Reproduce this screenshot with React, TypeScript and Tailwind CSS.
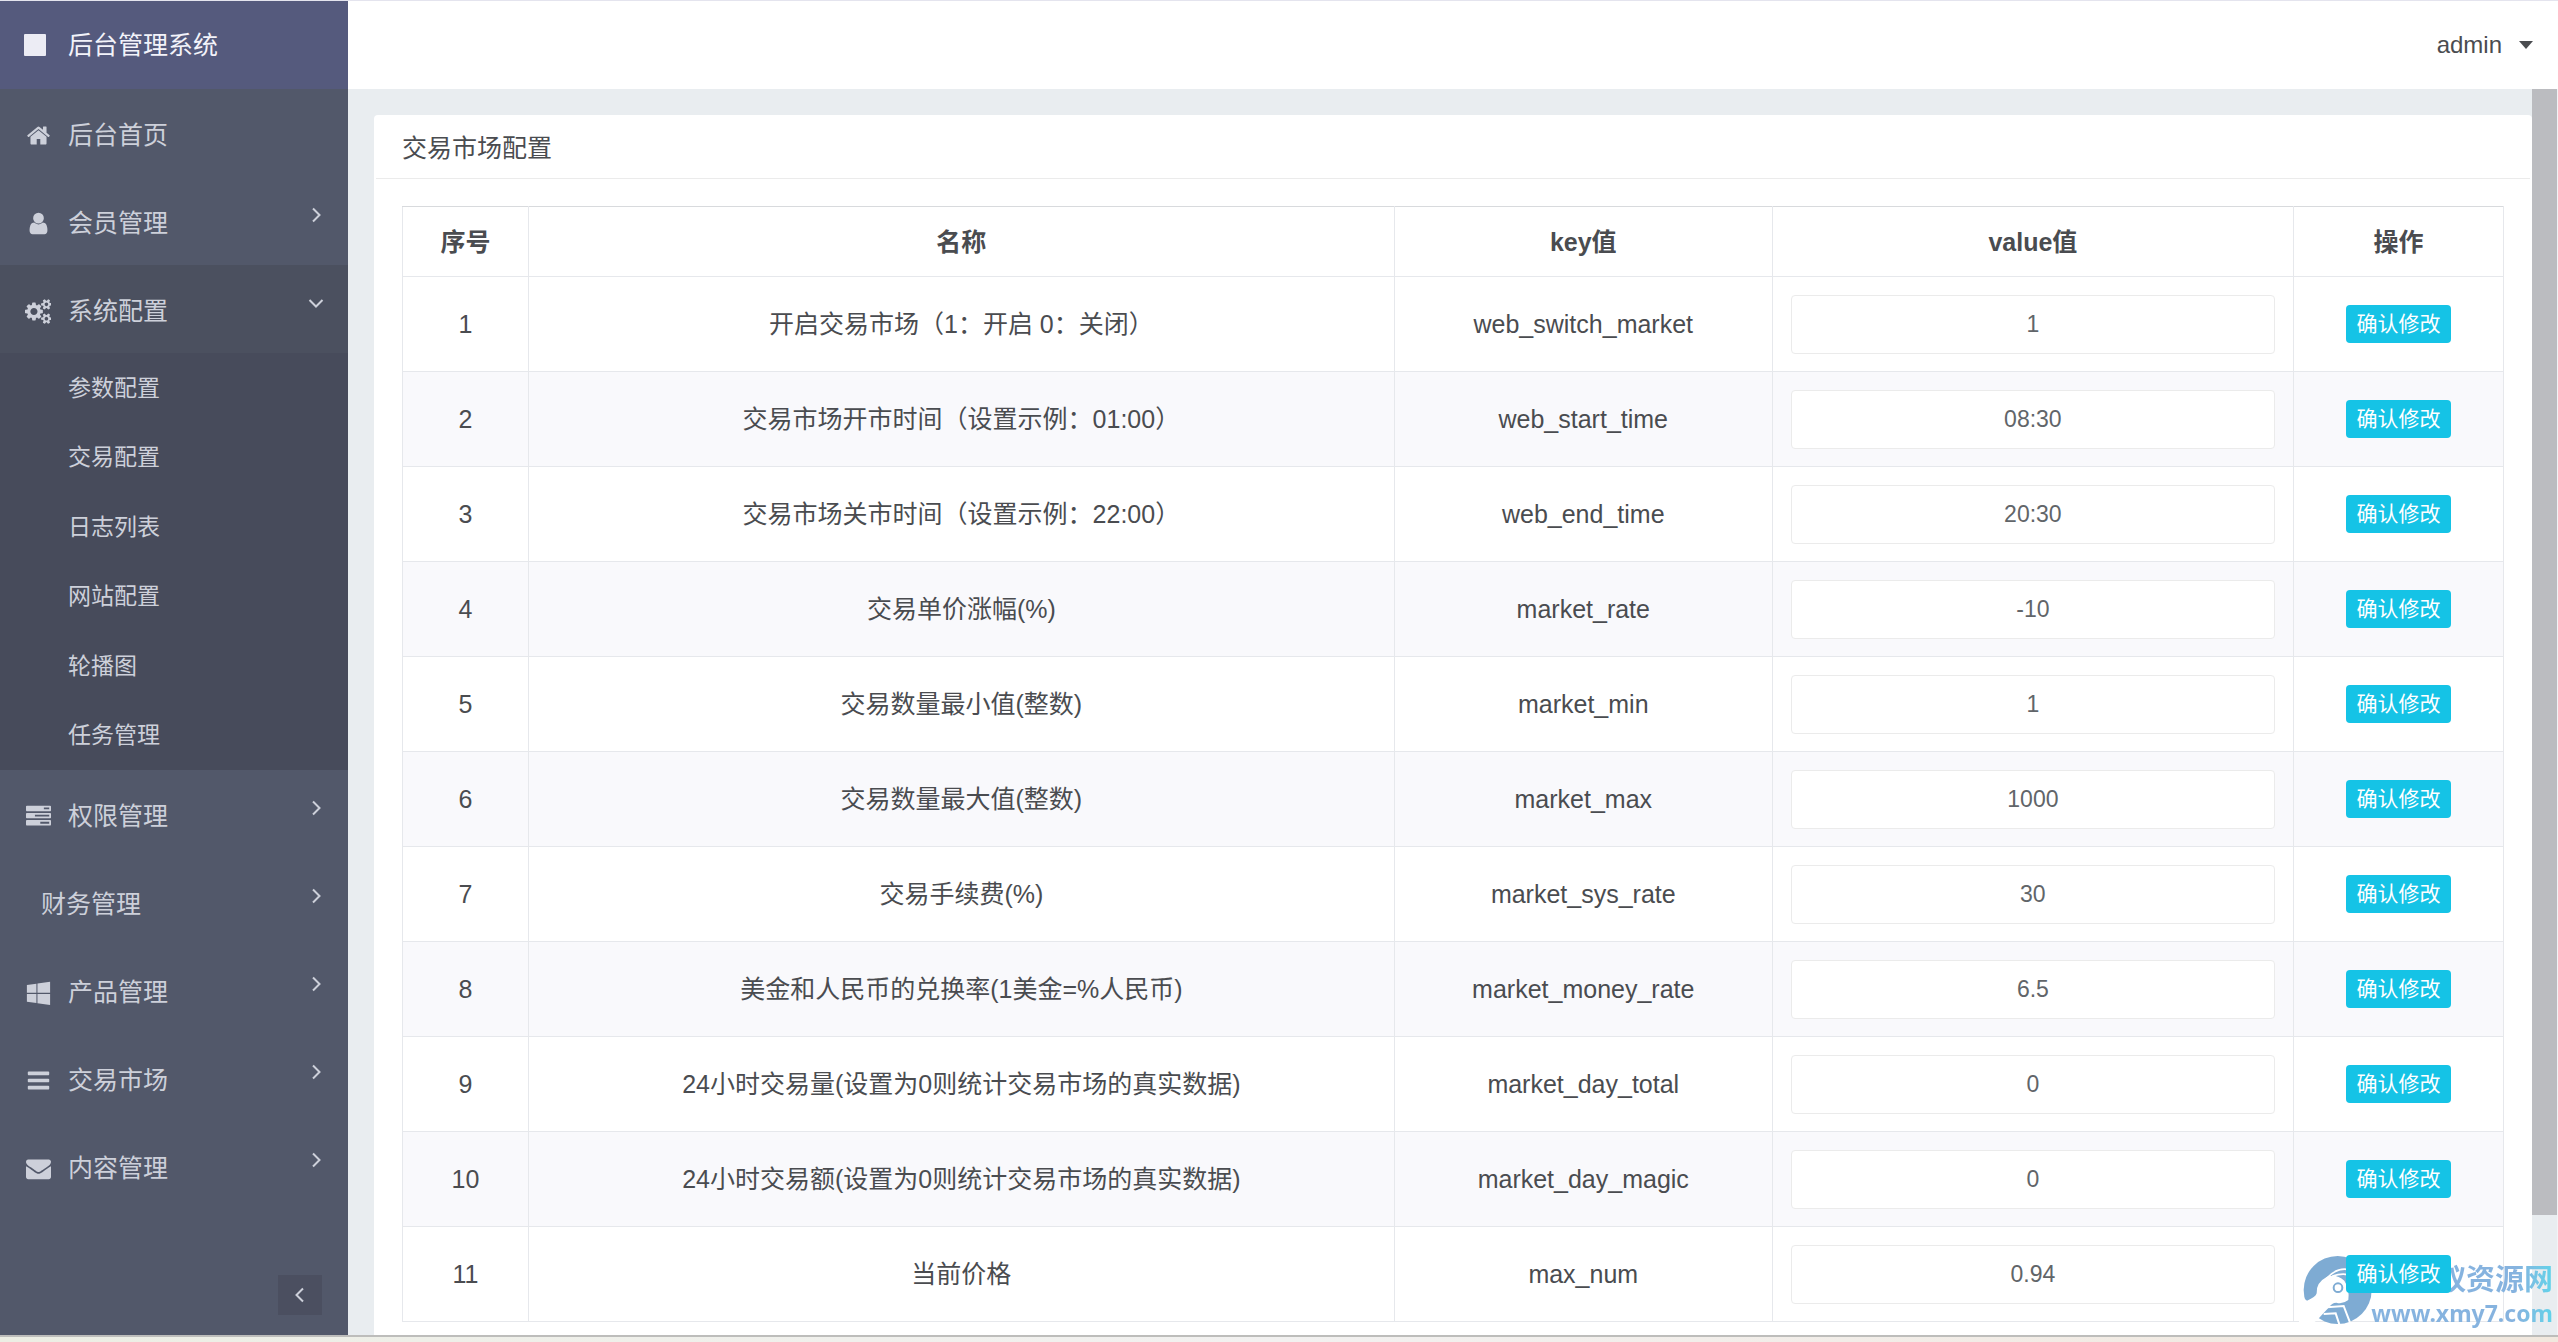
import { useState } from "react";

type MenuItem = { label: string; icon?: string; box?: string; active?: boolean; arrow?: boolean };

const icons = {
  home: "M1472 992v480q0 26-19 45t-45 19h-384v-384h-256v384h-384q-26 0-45-19t-19-45v-480q0-1 .5-3t.5-3l575-474 575 474q1 2 1 6zm223-69l-62 74q-8 9-21 11h-3q-13 0-21-7l-692-577-692 577q-12 8-24 7-13-2-21-11l-62-74q-8-10-7-23.5t11-21.5l719-599q32-26 76-26t76 26l244 204v-195q0-14 9-23t23-9h192q14 0 23 9t9 23v408l219 182q10 8 11 21.5t-7 23.5z",
  user: "M1536 1399q0 109-62.5 187t-150.5 78h-854q-88 0-150.5-78t-62.5-187q0-85 8.5-160.5t31.5-152 58.5-131 94-89 134.5-34.5q131 128 313 128t313-128q76 0 134.5 34.5t94 89 58.5 131 31.5 152 8.5 160.5zm-256-887q0 159-112.5 271.5t-271.5 112.5-271.5-112.5-112.5-271.5 112.5-271.5 271.5-112.5 271.5 112.5 112.5 271.5z",
  cogs: "M896 896q0-106-75-181t-181-75-181 75-75 181 75 181 181 75 181-75 75-181zm768 512q0-52-38-90t-90-38-90 38-38 90q0 53 37.5 90.5t90.5 37.5 90.5-37.5 37.5-90.5zm0-1024q0-52-38-90t-90-38-90 38-38 90q0 53 37.5 90.5t90.5 37.5 90.5-37.5 37.5-90.5zm-384 421v185q0 10-7 19.5t-16 10.5l-155 24q-11 35-32 76 34 48 90 115 7 11 7 20 0 12-7 19-23 30-82.5 89.5t-78.5 59.5q-11 0-21-7l-115-90q-37 19-77 31-11 108-23 155-7 24-30 24h-186q-11 0-20-7.5t-10-17.5l-23-153q-34-10-75-31l-118 89q-7 7-20 7-11 0-21-8-144-133-144-160 0-9 7-19 10-14 41-53t47-61q-23-44-35-82l-152-24q-10-1-17-9.5t-7-19.5v-185q0-10 7-19.5t16-10.5l155-24q11-35 32-76-34-48-90-115-7-11-7-20 0-12 7-20 22-30 82-89t79-59q11 0 21 7l115 90q34-18 77-32 11-108 23-154 7-24 30-24h186q11 0 20 7.5t10 17.5l23 153q34 10 75 31l118-89q8-7 20-7 11 0 21 8 144 133 144 160 0 8-7 19-12 16-42 54t-45 60q23 48 34 82l152 23q10 2 17 10.5t7 19.5zm640 533v140q0 16-149 31-12 27-30 52 51 113 51 138 0 4-4 7-122 71-124 71-8 0-46-47t-52-68q-20 2-30 2t-30-2q-14 21-52 68t-46 47q-2 0-124-71-4-3-4-7 0-25 51-138-18-25-30-52-149-15-149-31v-140q0-16 149-31 13-29 30-52-51-113-51-138 0-4 4-7 4-2 35-20t59-34 30-16q8 0 46 46.5t52 67.5q20-2 30-2t30 2q51-71 92-112l6-2q4 0 124 70 4 3 4 7 0 25-51 138 17 23 30 52 149 15 149 31zm0-1024v140q0 16-149 31-12 27-30 52 51 113 51 138 0 4-4 7-122 71-124 71-8 0-46-47t-52-68q-20 2-30 2t-30-2q-14 21-52 68t-46 47q-2 0-124-71-4-3-4-7 0-25 51-138-18-25-30-52-149-15-149-31v-140q0-16 149-31 13-29 30-52-51-113-51-138 0-4 4-7 4-2 35-20t59-34 30-16q8 0 46 46.5t52 67.5q20-2 30-2t30 2q51-71 92-112l6-2q4 0 124 70 4 3 4 7 0 25-51 138 17 23 30 52 149 15 149 31z",
  tasks: "M1024 1408h640v-128h-640v128zm-384-512h1024v-128h-1024v128zm640-512h384v-128h-384v128zm512 832v256q0 26-19 45t-45 19h-1664q-26 0-45-19t-19-45v-256q0-26 19-45t45-19h1664q26 0 45 19t19 45zm0-512v256q0 26-19 45t-45 19h-1664q-26 0-45-19t-19-45v-256q0-26 19-45t45-19h1664q26 0 45 19t19 45zm0-512v256q0 26-19 45t-45 19h-1664q-26 0-45-19t-19-45v-256q0-26 19-45t45-19h1664q26 0 45 19t19 45z",
  windows: "M746 1006v651l-682-94v-557h682zm0-743v659h-682v-565zm982 743v786l-907-125v-661h907zm0-878v794h-907v-669z",
  bars: "M1664 1344v128q0 26-19 45t-45 19h-1408q-26 0-45-19t-19-45v-128q0-26 19-45t45-19h1408q26 0 45 19t19 45zm0-512v128q0 26-19 45t-45 19h-1408q-26 0-45-19t-19-45v-128q0-26 19-45t45-19h1408q26 0 45 19t19 45zm0-512v128q0 26-19 45t-45 19h-1408q-26 0-45-19t-19-45v-128q0-26 19-45t45-19h1408q26 0 45 19t19 45z",
  envelope: "M1792 710v794q0 66-47 113t-113 47h-1472q-66 0-113-47t-47-113v-794q44 49 101 87 362 246 497 345 57 42 92.5 65.5t94.5 48 110 24.5h2q51 0 110-24.5t94.5-48 92.5-65.5q170-123 498-345 57-39 100-87zm0-294q0 79-49 151t-122 123q-376 261-468 325-10 7-42.5 31t-54 38.5-52 32.5-57.5 27-50 9h-2q-23 0-50-9t-57.5-27-52-32.5-54-38.5-42.5-31q-91-64-262-182.5t-205-142.5q-62-42-117-115.5t-55-136.5q0-78 41.5-130t118.5-52h1472q65 0 112.5 47t47.5 113z",
};

const topMenu: MenuItem[] = [
  { label: "后台首页", icon: icons.home },
  { label: "会员管理", icon: icons.user, arrow: true },
  { label: "系统配置", icon: icons.cogs, box: "0 0 1920 1792", arrow: true, active: true },
];

const subMenu = ["参数配置", "交易配置", "日志列表", "网站配置", "轮播图", "任务管理"];

const bottomMenu: MenuItem[] = [
  { label: "权限管理", icon: icons.tasks, arrow: true },
  { label: "财务管理", arrow: true },
  { label: "产品管理", icon: icons.windows, arrow: true },
  { label: "交易市场", icon: icons.bars, arrow: true },
  { label: "内容管理", icon: icons.envelope, arrow: true },
];

const rows = [
  { name: "开启交易市场（1：开启 0：关闭）", key: "web_switch_market", value: "1" },
  { name: "交易市场开市时间（设置示例：01:00）", key: "web_start_time", value: "08:30" },
  { name: "交易市场关市时间（设置示例：22:00）", key: "web_end_time", value: "20:30" },
  { name: "交易单价涨幅(%)", key: "market_rate", value: "-10" },
  { name: "交易数量最小值(整数)", key: "market_min", value: "1" },
  { name: "交易数量最大值(整数)", key: "market_max", value: "1000" },
  { name: "交易手续费(%)", key: "market_sys_rate", value: "30" },
  { name: "美金和人民币的兑换率(1美金=%人民币)", key: "market_money_rate", value: "6.5" },
  { name: "24小时交易量(设置为0则统计交易市场的真实数据)", key: "market_day_total", value: "0" },
  { name: "24小时交易额(设置为0则统计交易市场的真实数据)", key: "market_day_magic", value: "0" },
  { name: "当前价格", key: "max_num", value: "0.94" },
];

function Chevron({ className = "" }: { className?: string }) {
  return (
    <svg viewBox="0 0 16 16" className={`size-4 fill-none stroke-current stroke-2 ${className}`}>
      <path d="M5 1.5 11.5 8 5 14.5" />
    </svg>
  );
}

function MenuLink({ item }: { item: MenuItem }) {
  return (
    <a
      href="#"
      className={`flex h-[88px] items-center px-6 pt-1 ${item.active ? "bg-[#4b505f]" : ""}`}
    >
      {item.icon && (
        <span className="mr-4 flex w-7 justify-center">
          <svg viewBox={item.box ?? "0 0 1792 1792"} className="h-[25px] fill-current">
            <path d={item.icon} />
          </svg>
        </span>
      )}
      <span className={item.icon ? "" : "pl-[17px]"}>{item.label}</span>
      {item.arrow && <Chevron className={`mb-4 ml-auto ${item.active ? "rotate-90" : ""}`} />}
    </a>
  );
}

function Sidebar() {
  return (
    <aside className="flex w-[348px] shrink-0 flex-col bg-[#52586a] text-[25px] text-[#cdd0da]">
      <a href="#" className="flex h-[88px] shrink-0 items-center gap-[22px] bg-[#555a7d] pl-6 text-[#f3f3fa]">
        <span className="size-[22px] rounded-[1px] bg-[#ececf4]" />
        后台管理系统
      </a>
      <nav>
        {topMenu.map((item) => (
          <MenuLink key={item.label} item={item} />
        ))}
        <div className="grid h-[417px] auto-rows-fr bg-[#474b5b] text-[23px]">
          {subMenu.map((label) => (
            <a key={label} href="#" className="flex items-center pl-[68px]">
              {label}
            </a>
          ))}
        </div>
        {bottomMenu.map((item) => (
          <MenuLink key={item.label} item={item} />
        ))}
      </nav>
      <button
        aria-label="收起菜单"
        className="mt-auto mr-[26px] mb-5 flex h-10 w-11 items-center justify-center self-end bg-[#4b4f60]"
      >
        <Chevron className="rotate-180" />
      </button>
    </aside>
  );
}

function ConfigTable() {
  const [values, setValues] = useState(rows.map((row) => row.value));

  return (
    <table className="w-full table-fixed border-collapse border border-[#e6e8ec] border-t-[#d8dadd] text-center">
      <colgroup>
        <col className="w-[6%]" />
        <col />
        <col className="w-[18%]" />
        <col className="w-[24.8%]" />
        <col className="w-[10%]" />
      </colgroup>
      <thead>
        <tr className="h-[70px]">
          {["序号", "名称", "key值", "value值", "操作"].map((title) => (
            <th key={title} className="border border-[#e6e8ec] border-t-[#d8dadd] font-bold">
              {title}
            </th>
          ))}
        </tr>
      </thead>
      <tbody>
        {rows.map((row, i) => (
          <tr key={row.key} className="h-[95px] even:bg-[#f9f9fc]">
            <td className="border border-[#e6e8ec]">{i + 1}</td>
            <td className="border border-[#e6e8ec]">{row.name}</td>
            <td className="border border-[#e6e8ec]">{row.key}</td>
            <td className="border border-[#e6e8ec] px-[18px]">
              <input
                aria-label={row.name}
                value={values[i]}
                onChange={(e) => setValues(values.map((v, n) => (n === i ? e.target.value : v)))}
                className="block h-[59px] w-full rounded-sm border border-[#ebebeb] bg-white text-center text-[23px] text-[#616569]"
              />
            </td>
            <td className="border border-[#e6e8ec]">
              <button className="relative z-10 mx-auto block h-[38px] w-[105px] rounded-[4px] bg-[#15c3e6] text-[21px] text-white">
                确认修改
              </button>
            </td>
          </tr>
        ))}
      </tbody>
    </table>
  );
}

function Watermark() {
  return (
    <div className="pointer-events-none absolute right-[5px] bottom-3 flex items-end font-bold">
      <svg viewBox="0 0 240 240" className="-mr-2 size-20 shrink-0">
        <circle cx="116" cy="120" r="102" fill="#7eabd3" />
        <path
          d="M12 160Q14 140 24 152Q50 142 53 130Q50 98 84 80Q112 70 136 92Q152 116 148 150Q130 164 112 158Q98 158 90 172L58 206L20 240L0 240L0 162Z"
          fill="#fff"
        />
        <path d="M82 86Q118 46 160 62M100 78Q150 62 182 92" fill="none" stroke="#fff" strokeWidth="5" />
        <circle cx="117" cy="113" r="13" fill="none" stroke="#7eabd3" strokeWidth="6" />
        <path d="M84 172L134 168L154 220M74 192L110 190L122 226" fill="none" stroke="#fff" strokeWidth="6" />
      </svg>
      <div className="bg-linear-to-r from-[#86b3df] from-80% to-[#5fd3ea] bg-clip-text text-right leading-[33px] text-transparent">
        <div className="text-[29px]">小蚂蚁资源网</div>
        <div className="font-['Noto_Sans'] text-[23px]">www.xmy7.com</div>
      </div>
    </div>
  );
}

export default function App() {
  return (
    <div className="flex h-screen flex-col overflow-hidden border-t border-[#e4e4ee] bg-white font-['Liberation_Sans','Noto_Sans_CJK_SC',sans-serif] text-[25px] leading-9 text-[#4a4c50]">
      <div className="flex min-h-0 flex-1">
        <Sidebar />
        <div className="flex min-w-0 flex-1 flex-col">
          <header className="flex h-[88px] shrink-0 items-center justify-end bg-white pr-[25px] text-[24px]">
            <button className="flex items-center gap-[17px]">
              admin
              <svg viewBox="0 0 14 8" className="h-2 w-3.5 fill-current">
                <path d="M0 0h14L7 8z" />
              </svg>
            </button>
          </header>
          <div className="flex min-h-0 flex-1 bg-[#e9edf0]">
            <main className="min-w-0 flex-1 overflow-hidden pt-[26px] pl-[26px]">
              <section className="min-h-full rounded-[4px] bg-white">
                <h1 className="mx-0.5 border-b border-[#ebebeb] px-[26px] pt-[15px] pb-3">交易市场配置</h1>
                <div className="px-7 py-[27px]">
                  <ConfigTable />
                </div>
              </section>
            </main>
            <div className="w-[26px] shrink-0 border-r border-[#f4f4f6]">
              <div className="h-[90.4%] bg-[#bbbcc0]" />
            </div>
          </div>
        </div>
      </div>
      <footer className="h-[7px] shrink-0 border-t-2 border-[#bdbdbb] bg-linear-to-r from-[#eceee4] via-[#f2f1f0] to-[#f1e8de]" />
      <Watermark />
    </div>
  );
}
